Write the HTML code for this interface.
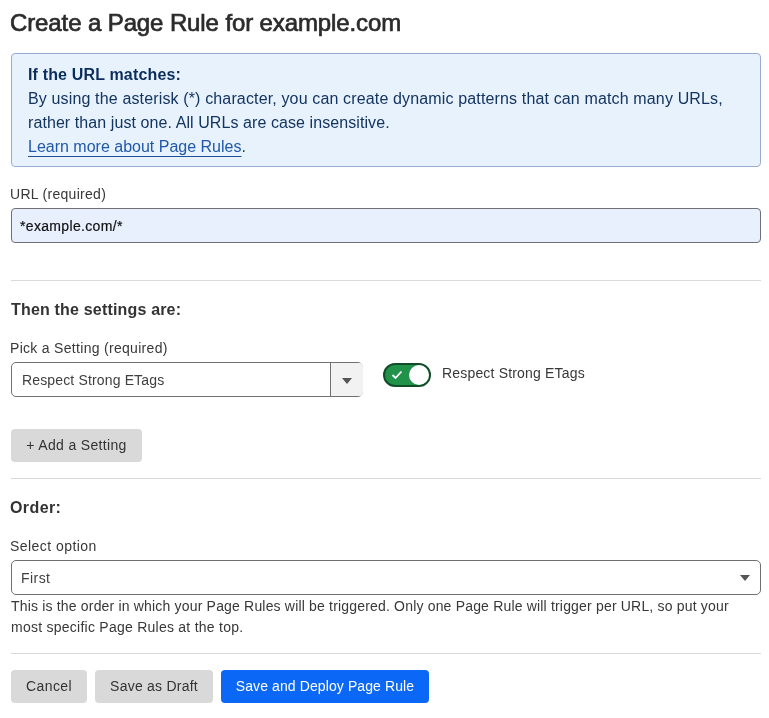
<!DOCTYPE html>
<html>
<head>
<meta charset="utf-8">
<style>
html,body{margin:0;padding:0;background:#fff;}
body{width:769px;height:718px;position:relative;overflow:hidden;font-family:"Liberation Sans",sans-serif;color:#404040;}
.a{position:absolute;white-space:nowrap;}
h1{position:absolute;margin:0;left:10px;top:8px;font-size:24px;line-height:30px;font-weight:normal;color:#2b2b2b;letter-spacing:-0.11px;-webkit-text-stroke:0.7px #2b2b2b;}
.info{position:absolute;left:11px;top:53px;width:748px;height:112px;border:1px solid #98aed1;background:#e7f2fd;border-radius:4px;}
.info .t{position:absolute;left:16px;font-size:16px;line-height:24px;color:#143461;white-space:nowrap;}
.info b{color:#0b2d5c;}
.info a{color:#2158ab;text-decoration:underline;text-decoration-color:#1f4f96;text-underline-offset:4px;}
.lbl{position:absolute;left:11px;font-size:14px;line-height:20px;color:#383838;white-space:nowrap;}
.input{position:absolute;left:11px;top:208px;width:748px;height:33px;border:1px solid #6f7177;border-radius:4px;background:#e8f0fe;}
.input span{position:absolute;left:8px;top:7px;letter-spacing:0.33px;font-size:14px;line-height:20px;color:#111;-webkit-text-stroke:0.2px #111;}
.hr{position:absolute;left:11px;width:750px;height:1px;background:#d9d9d9;}
.h3{position:absolute;left:11px;font-size:16px;line-height:24px;font-weight:bold;color:#333;white-space:nowrap;}
.sel{position:absolute;border:1px solid #707070;border-radius:5px;background:#fff;}
.sel .v{position:absolute;left:10px;font-size:14px;line-height:20px;color:#404040;white-space:nowrap;}
.tri{position:absolute;width:0;height:0;border-left:5px solid transparent;border-right:5px solid transparent;border-top:6px solid #555;}
.btn{position:absolute;height:33px;border-radius:4px;background:#d9d9d9;}
.btn span{position:absolute;left:0;right:0;text-align:center;top:6px;font-size:14px;line-height:20px;color:#333;white-space:nowrap;}
</style>
</head>
<body>
<div id="w" style="position:absolute;left:0;top:0;width:769px;height:718px;will-change:transform">
<h1>Create a Page Rule for example.com</h1>

<div class="info">
  <div class="t" style="top:9px;letter-spacing:0.16px"><b>If the URL matches:</b></div>
  <div class="t" style="top:33px;letter-spacing:0.145px">By using the asterisk (*) character, you can create dynamic patterns that can match many URLs,</div>
  <div class="t" style="top:57px;letter-spacing:0.08px">rather than just one. All URLs are case insensitive.</div>
  <div class="t" style="top:81px;letter-spacing:0px"><a>Learn more about Page Rules</a><span style="color:#2a3a50">.</span></div>
</div>

<div class="lbl" style="top:184px;left:10px;letter-spacing:0.29px">URL (required)</div>
<div class="input"><span>*example.com/*</span></div>

<div class="hr" style="top:280px"></div>

<div class="h3" style="top:298px;letter-spacing:0.18px">Then the settings are:</div>

<div class="lbl" style="top:338px;left:10px;letter-spacing:0.3px">Pick a Setting (required)</div>
<div class="sel" style="left:11px;top:362px;width:350px;height:33px;">
  <div class="v" style="top:7px;left:10px;letter-spacing:0.15px">Respect Strong ETags</div>
  <div style="position:absolute;left:318px;top:0;width:32px;height:33px;border-left:1px solid #707070;background:#f2f2f2;border-radius:0 4px 4px 0;"></div>
  <div class="tri" style="left:330px;top:15px"></div>
</div>

<div style="position:absolute;left:383px;top:363px;width:44px;height:20px;border:2px solid #114d29;border-radius:12px;background:#20924a;">
  <svg style="position:absolute;left:6px;top:5px" width="12" height="10" viewBox="0 0 12 10"><path d="M1.5 5 L4.5 8 L10.5 1.5" fill="none" stroke="#fff" stroke-width="1.8"/></svg>
  <div style="position:absolute;left:24px;top:0;width:20px;height:20px;border-radius:50%;background:#fff;"></div>
</div>
<div class="lbl" style="left:442px;top:363px;letter-spacing:0.18px">Respect Strong ETags</div>

<div class="btn" style="left:11px;top:429px;width:131px;"><span style="letter-spacing:0.33px">+ Add a Setting</span></div>

<div class="hr" style="top:478px"></div>

<div class="h3" style="top:496px;left:10px;letter-spacing:0.4px">Order:</div>

<div class="lbl" style="top:536px;left:10px;letter-spacing:0.45px">Select option</div>
<div class="sel" style="left:11px;top:560px;width:748px;height:33px;">
  <div class="v" style="top:7px;left:9px;letter-spacing:0.44px">First</div>
  <div class="tri" style="left:728px;top:14px"></div>
</div>

<div class="lbl" style="top:596px;letter-spacing:0.18px">This is the order in which your Page Rules will be triggered. Only one Page Rule will trigger per URL, so put your</div>
<div class="lbl" style="top:617px;letter-spacing:0.25px">most specific Page Rules at the top.</div>

<div class="hr" style="top:653px"></div>

<div class="btn" style="left:11px;top:670px;width:76px;"><span style="letter-spacing:0.42px">Cancel</span></div>
<div class="btn" style="left:95px;top:670px;width:118px;"><span style="letter-spacing:0.23px">Save as Draft</span></div>
<div class="btn" style="left:221px;top:670px;width:208px;background:#0b67f5;"><span style="color:#fff;letter-spacing:0.1px">Save and Deploy Page Rule</span></div>
</div>
</body>
</html>
